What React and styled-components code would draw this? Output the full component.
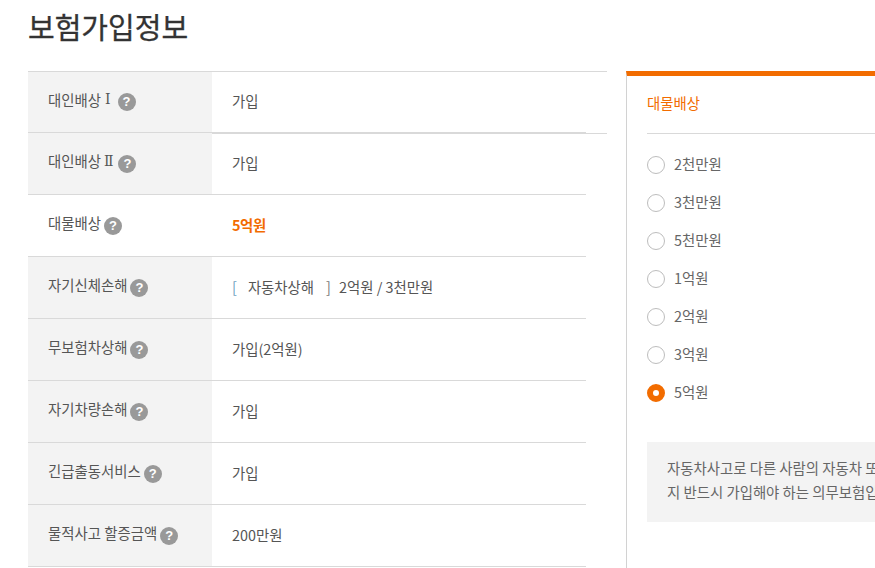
import React from "react";
import styled, { createGlobalStyle } from "styled-components";

const Global = createGlobalStyle`
  html, body { margin: 0; padding: 0; background: #fff; overflow: hidden; }
  body { font-family: "Noto Sans CJK KR", "Noto Sans", sans-serif; font-size: 14.4px; color: #555; }
`;
const Page = styled.div`
  width: 875px; height: 568px; overflow: hidden; padding-left: 28px; box-sizing: border-box;
`;
const Title = styled.h2`
  margin: 0; height: 71px; padding-top: 5px; box-sizing: border-box;
  font-size: 29px; line-height: 42px; font-weight: 400; color: #333; -webkit-text-stroke: 0.3px #333;
`;
const Columns = styled.div`
  display: flex; width: 900px; align-items: flex-start;
`;
const Left = styled.div`
  width: 579px; flex: none; margin-right: 19px;
`;
const FirstGroup = styled.div`
  border-top: 1px solid #d9d9d9; border-bottom: 1px solid #d9d9d9; height: 61px; margin-bottom: -1px;
`;
const Row = styled.div`
  display: flex; width: 558px; height: ${p => p.$first ? 61 : 62}px; box-sizing: border-box;
  border-bottom: 1px solid #d9d9d9;
`;
const Label = styled.div`
  width: 184px; flex: none; box-sizing: border-box; padding: 0 0 6px 20px;
  display: flex; align-items: center; background: ${p => p.$plain ? "#fff" : "#f3f3f3"};
  color: #555; white-space: pre;
`;
const Numeral = styled.span`
  font-family: "DejaVu Serif", serif; font-size: 14px; margin-left: ${p => p.$gap}px;
`;
const Help = styled.span`
  width: 18px; height: 18px; border-radius: 50%; background: #999; color: #fff; flex: none;
  margin-left: ${p => p.$gap ?? 3}px; margin-top: ${p => p.$first ? 5 : 6}px;
  display: flex; align-items: center; justify-content: center;
  font: 700 13px/18px "Liberation Sans", sans-serif;
`;
const Value = styled.div`
  flex: 1; padding: 0 0 ${p => p.$first ? 4 : 2}px 20px; display: flex; align-items: center;
  color: #555; white-space: pre;
  ${p => p.$accent && "color: #f26c00; font-weight: 700; letter-spacing: -0.4px;"}
`;
const OpenBracket = styled.span`
  color: #6f9fc0;
`;
const CloseBracket = styled.span`
  color: #777; margin-right: 8px;
`;
const Tag = styled.span`
  margin: 0 12px 0 11px;
`;
const Panel = styled.aside`
  width: 300px; flex: none; height: 497px; box-sizing: border-box;
  border-top: 5px solid #f26c00; border-left: 1px solid #d2d2d2; padding-left: 20px;
`;
const PanelTitle = styled.div`
  height: 58px; border-bottom: 1px solid #d9d9d9; box-sizing: border-box; color: #f26c00; font-weight: 400;
  line-height: 53px;
`;
const Options = styled.div`
  display: flex; flex-direction: column; gap: 20px; padding-top: 22px;
`;
const Option = styled.div`
  display: flex; align-items: center; height: 18px; color: #666;
`;
const OptionText = styled.span`
  margin-bottom: 3px;
`;
const Radio = styled.span`
  width: 18px; height: 18px; box-sizing: border-box; border-radius: 50%; margin-right: 9px; flex: none;
  background: #fff;
  border: ${p => p.$on ? "6px solid #f26c00" : "1px solid #bdbdbd"};
`;
const Note = styled.div`
  margin-top: 40px; height: 80px; box-sizing: border-box; width: 400px; background: #f3f3f3;
  padding: 14px 20px; line-height: 24px; color: #666; white-space: nowrap;
`;

const rows = [
  ["대물배상", "5억원", true],
  ["자기신체손해", null],
  ["무보험차상해", "가입(2억원)"],
  ["자기차량손해", "가입"],
  ["긴급출동서비스", "가입"],
  ["물적사고 할증금액", "200만원"],
];
const options = ["2천만원", "3천만원", "5천만원", "1억원", "2억원", "3억원", "5억원"];

export default function App() {
  return (
    <Page>
      <Global />
      <Title>보험가입정보</Title>
      <Columns>
        <Left>
          <FirstGroup>
            <Row $first>
              <Label>대인배상<Numeral $gap={4}>Ⅰ</Numeral><Help $first $gap={7}>?</Help></Label>
              <Value $first>가입</Value>
            </Row>
          </FirstGroup>
          <Row>
            <Label>대인배상<Numeral $gap={3}>Ⅱ</Numeral><Help $gap={5}>?</Help></Label>
            <Value>가입</Value>
          </Row>
          {rows.map(([l, v, plain]) => (
            <Row key={l}>
              <Label $plain={plain}>{l}<Help>?</Help></Label>
              {v === null ? (
                <Value>
                  <OpenBracket>[</OpenBracket><Tag>자동차상해</Tag><CloseBracket>]</CloseBracket>2억원 / 3천만원
                </Value>
              ) : (
                <Value $accent={plain}>{v}</Value>
              )}
            </Row>
          ))}
        </Left>
        <Panel>
          <PanelTitle>대물배상</PanelTitle>
          <Options>
            {options.map((o, i) => (
              <Option key={o}>
                <Radio $on={i === options.length - 1} />
                <OptionText>{o}</OptionText>
              </Option>
            ))}
          </Options>
          <Note>
            자동차사고로 다른 사람의 자동차 또는 재물에 피해를 입힌 경우 보상하는 담보로
            <br />
            지 반드시 가입해야 하는 의무보험입니다.
          </Note>
        </Panel>
      </Columns>
    </Page>
  );
}
